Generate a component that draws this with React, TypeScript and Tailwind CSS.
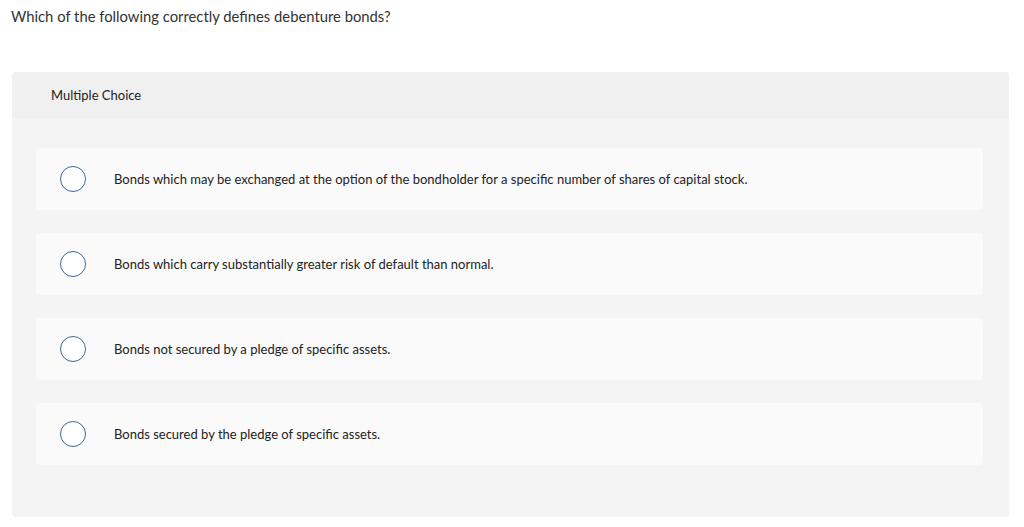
import React from 'react';

const options = [
  'Bonds which may be exchanged at the option of the bondholder for a specific number of shares of capital stock.',
  'Bonds which carry substantially greater risk of default than normal.',
  'Bonds not secured by a pledge of specific assets.',
  'Bonds secured by the pledge of specific assets.'
];

function Option({ text }: { text: string }) {
  return (
    <div className="flex h-[62px] items-center rounded-[4px] bg-[#fafafa]">
      <span className="ml-[24px] h-[26px] w-[26px] shrink-0 rounded-full border border-[#3a679f] bg-white" />
      <span className="ml-[28px] pt-[2px] text-[13px] text-[#222]">{text}</span>
    </div>
  );
}

export default function App() {
  return (
    <div className="min-h-[527px] bg-white font-['Lato',_sans-serif]">
      <h1 className="px-[11px] pt-[6px] text-[14.8px] leading-[20px] text-[#333]">
        Which of the following correctly defines debenture bonds?
      </h1>

      {/* 문제 패널 */}
      <section className="ml-[12px] mt-[46px] w-[997px] overflow-hidden rounded-[4px] bg-[#f4f4f4]">
        <div className="flex h-[46px] items-center bg-[#f0f0f0] px-[39px]">
          <span className="pt-[2px] text-[13px] text-[#222]">Multiple Choice</span>
        </div>
        <div className="flex flex-col gap-[23px] pl-[24px] pr-[26px] pt-[30px] pb-[52px]">
          {options.map((o) => (
            <Option key={o} text={o} />
          ))}
        </div>
      </section>
    </div>
  );
}
